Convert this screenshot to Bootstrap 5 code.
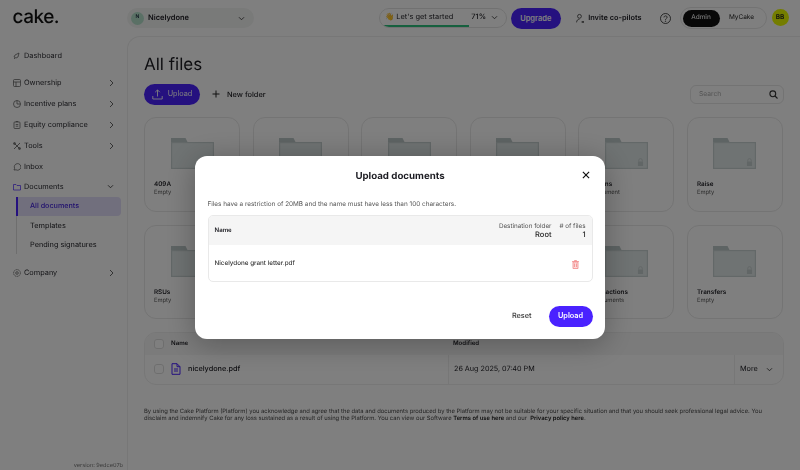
<!DOCTYPE html>
<html lang="en">
<head>
    <meta charset="UTF-8">
    <title>All files</title>
    <link href="https://cdn.jsdelivr.net/npm/bootstrap@5.3.3/dist/css/bootstrap.min.css" rel="stylesheet">
    <script src="https://cdn.jsdelivr.net/npm/bootstrap@5.3.3/dist/js/bootstrap.bundle.min.js"></script>
    <style>
        html, body { height: 470px; overflow: hidden; }
        body { font-family: Inter, "Liberation Sans", sans-serif; color: #1c1c22; background: #fff; text-rendering: geometricPrecision; }
        .page { height: 470px; filter: blur(.35px); }
        .topbar { height: 36px; padding: 8px 0 0 0; }
        .topbar > * { flex: none; }
        .logo-box { width: 127px; padding-left: 12.5px; margin-top: -3px; }
        .logo-text { font-size: 19px; font-weight: 500; letter-spacing: -.5px; line-height: 20px; color: #111; }
        .org-pick { width: 127px; height: 20px; background: #f3f4f3; border-radius: 10px; padding: 0 9px 0 4px; font-size: 7.5px; font-weight: 600; }
        .org-dot { width: 13px; height: 13px; border-radius: 50%; background: #b4e0cb; font-size: 5px; color: #234; margin-right: 4px; }
        .start-pill { width: 128px; height: 20px; margin-left: 125px; border: 1px solid #e3e3e3; border-radius: 10px; padding: 0 8px 2px 5px; font-size: 7.4px; overflow: hidden; white-space: nowrap; }
        .start-pct { margin-left: auto; margin-right: 5px; font-weight: 500; }
        .start-bar { left: 0; bottom: 0; height: 2px; background: #2cc07d; }
        .up-pill { height: 21px; width: 49.5px; margin-left: 4px; background: #4a22ff; color: #fff; border-radius: 11px; font-size: 7.5px; font-weight: 600; padding: 0; border: 0; }
        .invite { margin-left: 15px; width: 66px; font-size: 7.4px; font-weight: 600; gap: 4px; white-space: nowrap; height: 20px; }
        .help-ico { margin-left: 18px; height: 20px; }
        .role-wrap { width: 87px; height: 22px; margin-left: 9px; border: 1px solid #e6e6e6; border-radius: 11px; padding: 2px; font-size: 6.5px; margin-top: -1px; }
        .role-on { width: 37px; height: 17px; background: #111; color: #fff; border-radius: 9px; }
        .role-off { flex: 1; color: #222; }
        .user-dot { width: 17px; height: 17px; margin-left: 5px; margin-top: 1px; border-radius: 50%; background: #e8fa00; font-size: 6.5px; font-weight: 600; }
        .side { width: 127px; padding-top: 9.5px; flex: none; }
        .side-item { height: 21px; padding: 0 13px 0 13px; font-size: 7.35px; color: #2a2a30; gap: 3px; }
        .side-item svg:first-child { flex: none; }
        .side-gap { margin-bottom: 6px; }
        .side-docs { margin-top: -1.5px; }
        .side-sub { margin-left: 16px; border-left: 1px solid #dcdcdc; }
        .side-sub div { height: 19px; padding-left: 13px; font-size: 7.35px; margin-right: 6px; }
        .side-sub .sel { background: #e3defa; color: #3f1fdc; font-weight: 500; font-size: 7.2px; border-left: 2px solid #4a22ff; margin-left: -1px; border-radius: 0 4px 4px 0; padding-left: 12px; }
        .ver { right: 4px; bottom: 0; font-size: 5.6px; color: #777; }
        .panel { flex: 1; min-width: 0; border: 1px solid #eee; border-right: 0; border-bottom: 0; border-top-left-radius: 13px; padding: 16px 16px 0 16px; background: #fff; }
        .page-title { font-size: 17px; font-weight: 400; line-height: 24px; margin: 0 0 7px; }
        .act-main { width: 56px; height: 21px; background: #4a22ff; color: #fff; border-radius: 11px; border: 0; font-size: 7.3px; gap: 5px; padding: 0; }
        .act-new { font-size: 7.4px; margin-left: 12px; gap: 7px; font-weight: 500; }
        .find { width: 94px; height: 19px; margin-left: auto; border: 1px solid #e6e6e6; border-radius: 6px; padding: 0 5px 0 8px; font-size: 6.7px; color: #aaa; margin-top: -1px; }
        .folder-grid { display: grid; grid-template-columns: repeat(6, 96px); column-gap: 12.6px; row-gap: 13px; margin-top: 12px; }
        .fold-card { height: 94.5px; border: 1px solid #e8e8e8; border-radius: 12px; padding: 20px 9px 0; }
        .fold-ico { display: block; margin: 0 auto 11px; width: 43px; height: 31px; }
        .fold-name { font-size: 6.3px; font-weight: 600; line-height: 9px; white-space: nowrap; }
        .fold-sub { font-size: 5.8px; color: #555; line-height: 8px; white-space: nowrap; }
        .lock-a { right: 29px; top: 40px; }
        .files { margin-top: 13px; border: 1px solid #eee; border-radius: 12px; overflow: hidden; }
        .files-head { height: 21.5px; background: #f7f7f7; font-size: 6.1px; font-weight: 600; }
        .files-row { height: 29px; font-size: 7.2px; }
        .c1 { width: 303px; padding-left: 9px; gap: 7px; }
        .c2 { width: 286px; padding-left: 5px; }
        .c3 { flex: 1; padding-left: 5px; }
        .files-row .c1, .files-row .c2, .files-row .c3 { height: 100%; }
        .files-row .c2, .files-row .c3 { border-left: 1px solid #eee; }
        .check-box { width: 10px; height: 10px; border: 1px solid #ddd; border-radius: 3px; background: #fff; }
        .file-name { font-size: 7.3px; font-weight: 500; }
        .legal { margin: 23px 0 0; font-size: 5.85px; line-height: 7.2px; color: #444; }
        .legal b { font-weight: 600; color: #222; }
        .modal-dialog.up-dlg { width: 410px; max-width: 410px; margin: 156px auto 0 195px; filter: blur(.3px); }
        .up-box { height: 183px; border: 0; border-radius: 12px; box-shadow: 0 4px 30px rgba(0,0,0,.3); padding: 13px 12.5px 12px; }
        .up-title { font-size: 9.7px; font-weight: 700; line-height: 15px; }
        .up-close { right: 15px; top: 15px; line-height: 0; }
        .up-note { font-size: 6.4px; color: #555; margin: 16px 0 0; line-height: 9px; }
        .up-table { margin-top: 6px; height: 68px; border: 1px solid #e9e9e9; border-radius: 5px; overflow: hidden; }
        .up-head { height: 29px; background: #f5f5f5; padding: 0 6px 0 6px; font-size: 6.1px; font-weight: 600; }
        .up-cap { font-size: 6.3px; font-weight: 400; color: #555; line-height: 8px; }
        .up-val { font-size: 7.5px; font-weight: 500; line-height: 9px; color: #222; }
        .up-rowline { height: 38px; padding: 0 13px 0 6px; font-size: 6.3px; font-weight: 500; color: #333; }
        .trash-ico { opacity: .8; }
        .up-foot { margin-top: 24px; }
        .foot-reset { font-size: 7.3px; font-weight: 500; margin-right: 17px; color: #333; }
        .foot-go { width: 44px; height: 21px; border-radius: 11px; background: #4a22ff; color: #fff; border: 0; font-size: 7.3px; font-weight: 600; padding: 0; }
    </style>
</head>
<body>
<svg width="0" height="0" class="position-absolute">
    <symbol id="folder" viewBox="0 0 43 31">
        <path d="M0 0h14.500l2 4h-16.500z" fill="#bcc8c8"/>
        <rect x=".6" y="4.6" width="41.8" height="25.8" fill="#dfe7e7" stroke="#c6d0d0" stroke-width="1.2"/>
    </symbol>
    <symbol id="lock" viewBox="0 0 8 9">
        <path d="M2 4V2.6a2 2 0 0 1 4 0V4" fill="none" stroke="#c2cccc" stroke-width="1"/>
        <rect x="1" y="4" width="6" height="5" rx=".6" fill="#c2cccc"/>
    </symbol>
    <symbol id="right" viewBox="0 0 6 8"><path d="M2 1l3 3-3 3" fill="none" stroke="#555" stroke-width=".9"/></symbol>
    <symbol id="down" viewBox="0 0 8 6"><path d="M1 1.5l3 3 3-3" fill="none" stroke="#333" stroke-width="1"/></symbol>
</svg>

<div class="page d-flex flex-column">
    <div class="topbar d-flex flex-shrink-0">
        <div class="logo-box"><span class="logo-text">cake.</span></div>
        <div class="org-pick d-flex align-items-center">
            <span class="org-dot d-flex align-items-center justify-content-center">N</span>
            <span>Nicelydone</span>
            <svg class="ms-auto" width="7" height="5"><use href="#down"/></svg>
        </div>
        <div class="start-pill d-flex align-items-center position-relative">
            <span>👋 Let's get started</span>
            <span class="start-pct">71%</span>
            <svg width="7" height="5"><use href="#down"/></svg>
            <span class="start-bar position-absolute" style="width: 71%"></span>
        </div>
        <button class="btn up-pill">Upgrade</button>
        <div class="invite d-flex align-items-center">
            <svg width="10" height="11" viewBox="0 0 10 11" fill="none" stroke="#333" stroke-width=".9"><circle cx="4" cy="3" r="2.2"/><path d="M.7 10c0-2.4 1.4-3.6 3.3-3.6"/><path d="M6.5 9.5h3" stroke-width="1.6"/></svg>
            <span>Invite co-pilots</span>
        </div>
        <div class="help-ico d-flex align-items-center">
            <svg width="11" height="11" viewBox="0 0 11 11" fill="none" stroke="#222" stroke-width=".8"><circle cx="5.5" cy="5.5" r="5"/><path d="M4 4.4c0-2 3.1-2 3.1-.1 0 1.200-1.600 1.200-1.600 2.500"/><circle cx="5.500" cy="8.200" r=".3"/></svg>
        </div>
        <div class="role-wrap d-flex align-items-center">
            <span class="role-on d-flex align-items-center justify-content-center">Admin</span>
            <span class="role-off text-center">MyCake</span>
        </div>
        <div class="user-dot d-flex align-items-center justify-content-center">BB</div>
    </div>

    <div class="d-flex flex-grow-1">
        <div class="side position-relative">
            <div class="side-item side-gap d-flex align-items-center">
                <svg width="8" height="8" viewBox="0 0 8 8" fill="none" stroke="#555" stroke-width=".7"><path d="M1 5l1-2 4-2-1 4-2 1zM1 7l1-1"/></svg>
                <span>Dashboard</span>
            </div>
            <div class="side-item d-flex align-items-center">
                <svg width="8" height="8" viewBox="0 0 8 8" fill="none" stroke="#555" stroke-width=".7"><rect x=".5" y=".5" width="7" height="7" rx="1"/><path d="M.5 3h7M3 3v4.500"/></svg>
                <span>Ownership</span>
                <svg class="ms-auto" width="6" height="8"><use href="#right"/></svg>
            </div>
            <div class="side-item d-flex align-items-center">
                <svg width="8" height="8" viewBox="0 0 8 8" fill="none" stroke="#555" stroke-width=".7"><circle cx="4" cy="4" r="3.500"/><path d="M4 .5V4h3.500"/></svg>
                <span>Incentive plans</span>
                <svg class="ms-auto" width="6" height="8"><use href="#right"/></svg>
            </div>
            <div class="side-item d-flex align-items-center">
                <svg width="8" height="8" viewBox="0 0 8 8" fill="none" stroke="#555" stroke-width=".7"><rect x="1" y="1" width="6" height="6.500" rx=".8"/><path d="M2.800 .5h2.400M2.700 3.500h2.600M2.700 5.200h2.600"/></svg>
                <span>Equity compliance</span>
                <svg class="ms-auto" width="6" height="8"><use href="#right"/></svg>
            </div>
            <div class="side-item d-flex align-items-center">
                <svg width="8" height="8" viewBox="0 0 8 8" fill="none" stroke="#555" stroke-width=".8"><path d="M1 1l6 6M7 1L1 7"/><circle cx="1.500" cy="1.500" r="1"/><circle cx="6.500" cy="6.500" r="1"/></svg>
                <span>Tools</span>
                <svg class="ms-auto" width="6" height="8"><use href="#right"/></svg>
            </div>
            <div class="side-item d-flex align-items-center">
                <svg width="8" height="8" viewBox="0 0 8 8" fill="none" stroke="#555" stroke-width=".7"><path d="M1 7l.6-1.700A3.300 3.300 0 1 1 3 6.800z"/></svg>
                <span>Inbox</span>
            </div>
            <div class="side-item side-docs d-flex align-items-center">
                <svg width="8" height="8" viewBox="0 0 8 8" fill="none" stroke="#4a22ff" stroke-width=".7"><path d="M.5 1.500h2.500l1 1h3.500v4.500h-7z"/></svg>
                <span>Documents</span>
                <svg class="ms-auto" width="7" height="5"><use href="#down"/></svg>
            </div>
            <div class="side-sub">
                <div class="sel d-flex align-items-center">All documents</div>
                <div class="d-flex align-items-center">Templates</div>
                <div class="d-flex align-items-center">Pending signatures</div>
            </div>
            <div class="side-item d-flex align-items-center mt-2">
                <svg width="8" height="8" viewBox="0 0 8 8" fill="none" stroke="#555" stroke-width=".7"><circle cx="4" cy="4" r="3.400" stroke-dasharray="1.500 .5"/><circle cx="4" cy="4" r="1.300"/></svg>
                <span>Company</span>
                <svg class="ms-auto" width="6" height="8"><use href="#right"/></svg>
            </div>
            <div class="ver position-absolute">version: 9edce07b</div>
        </div>

        <div class="panel">
            <h1 class="page-title">All files</h1>
            <div class="d-flex align-items-center">
                <button class="btn act-main d-flex align-items-center justify-content-center">
                    <svg width="11" height="11" viewBox="0 0 11 11" fill="none" stroke="#fff" stroke-width=".9"><path d="M5.500 7.500V1M3.200 3.200l2.300-2.300 2.300 2.300M.8 7v3h9.400V7"/></svg>
                    <span>Upload</span>
                </button>
                <div class="act-new d-flex align-items-center">
                    <svg width="8" height="8" viewBox="0 0 8 8" stroke="#222" stroke-width="1"><path d="M4 .5v7M.5 4h7"/></svg>
                    <span>New folder</span>
                </div>
                <div class="find d-flex align-items-center justify-content-between">
                    <span>Search</span>
                    <svg width="9" height="9" viewBox="0 0 9 9" fill="none" stroke="#333" stroke-width="1.100"><circle cx="3.800" cy="3.800" r="2.900"/><path d="M6 6l2.500 2.500"/></svg>
                </div>
            </div>

            <div class="folder-grid">
                <div class="fold-card"><svg class="fold-ico"><use href="#folder"/></svg><div class="fold-name">409A</div><div class="fold-sub">Empty</div></div>
                <div class="fold-card"><svg class="fold-ico"><use href="#folder"/></svg><div class="fold-name">Board</div><div class="fold-sub">Empty</div></div>
                <div class="fold-card"><svg class="fold-ico"><use href="#folder"/></svg><div class="fold-name">Equity</div><div class="fold-sub">Empty</div></div>
                <div class="fold-card"><svg class="fold-ico"><use href="#folder"/></svg><div class="fold-name">Legal</div><div class="fold-sub">Empty</div></div>
                <div class="fold-card position-relative"><svg class="fold-ico"><use href="#folder"/></svg><svg class="position-absolute lock-a" width="7" height="8"><use href="#lock"/></svg><div class="fold-name">Options</div><div class="fold-sub">1 document</div></div>
                <div class="fold-card position-relative"><svg class="fold-ico"><use href="#folder"/></svg><svg class="position-absolute lock-a" width="7" height="8"><use href="#lock"/></svg><div class="fold-name">Raise</div><div class="fold-sub">Empty</div></div>
                <div class="fold-card"><svg class="fold-ico"><use href="#folder"/></svg><div class="fold-name">RSUs</div><div class="fold-sub">Empty</div></div>
                <div class="fold-card"><svg class="fold-ico"><use href="#folder"/></svg><div class="fold-name">Shares</div><div class="fold-sub">Empty</div></div>
                <div class="fold-card"><svg class="fold-ico"><use href="#folder"/></svg><div class="fold-name">Tax</div><div class="fold-sub">Empty</div></div>
                <div class="fold-card"><svg class="fold-ico"><use href="#folder"/></svg><div class="fold-name">Grants</div><div class="fold-sub">Empty</div></div>
                <div class="fold-card position-relative"><svg class="fold-ico"><use href="#folder"/></svg><svg class="position-absolute lock-a" width="7" height="8"><use href="#lock"/></svg><div class="fold-name">Transactions</div><div class="fold-sub">2 documents</div></div>
                <div class="fold-card position-relative"><svg class="fold-ico"><use href="#folder"/></svg><svg class="position-absolute lock-a" width="7" height="8"><use href="#lock"/></svg><div class="fold-name">Transfers</div><div class="fold-sub">Empty</div></div>
            </div>

            <div class="files">
                <div class="files-head d-flex align-items-center">
                    <div class="c1 d-flex align-items-center"><span class="check-box"></span><span>Name</span></div>
                    <div class="c2">Modified</div>
                    <div class="c3"></div>
                </div>
                <div class="files-row d-flex align-items-center">
                    <div class="c1 d-flex align-items-center">
                        <span class="check-box"></span>
                        <svg width="10" height="12" viewBox="0 0 10 12" fill="none" stroke="#4a22ff" stroke-width="1"><path d="M1 .7h5l3 3v7.600H1zM6 .7v3h3M3 6h4M3 8h4"/></svg>
                        <span class="file-name">nicelydone.pdf</span>
                    </div>
                    <div class="c2 d-flex align-items-center">26 Aug 2025, 07:40 PM</div>
                    <div class="c3 d-flex align-items-center gap-2"><span class="file-name fw-normal">More</span><svg width="7" height="5"><use href="#down"/></svg></div>
                </div>
            </div>

            <p class="legal">By using the Cake Platform (Platform) you acknowledge and agree that the data and documents produced by the Platform may not be suitable for your specific situation and that you should seek professional legal advice. You disclaim and indemnify Cake for any loss sustained as a result of using the Platform. You can view our Software <b>Terms of use here</b> and our&nbsp; <b>Privacy policy here.</b></p>
        </div>
    </div>
</div>

<div class="modal-backdrop show"></div>
<div class="modal d-block" tabindex="-1">
    <div class="modal-dialog up-dlg">
        <div class="modal-content up-box position-relative">
            <div class="up-title text-center">Upload documents</div>
            <div class="up-close position-absolute">
                <svg width="8" height="8" viewBox="0 0 9 9" stroke="#111" stroke-width="1.300"><path d="M1 1l7 7M8 1L1 8"/></svg>
            </div>
            <p class="up-note">Files have a restriction of 20MB and the name must have less than 100 characters.</p>
            <div class="up-table">
                <div class="up-head d-flex align-items-center justify-content-between">
                    <span>Name</span>
                    <div class="d-flex gap-2 text-end">
                        <div><div class="up-cap">Destination folder</div><div class="up-val">Root</div></div>
                        <div><div class="up-cap"># of files</div><div class="up-val">1</div></div>
                    </div>
                </div>
                <div class="up-rowline d-flex align-items-center justify-content-between">
                    <span>Nicelydone grant letter.pdf</span>
                    <svg class="trash-ico" width="7" height="9" viewBox="0 0 7 9" fill="#fbd0d0" stroke="#f0706e" stroke-width=".8"><path d="M1 2h5v6.500H1zM0 1.500h7M2.500 1.500V.5h2v1M2.500 3.500v3.500M4.500 3.500v3.500"/></svg>
                </div>
            </div>
            <div class="up-foot d-flex align-items-center justify-content-end">
                <span class="foot-reset">Reset</span>
                <button class="btn foot-go">Upload</button>
            </div>
        </div>
    </div>
</div>
</body>
</html>
